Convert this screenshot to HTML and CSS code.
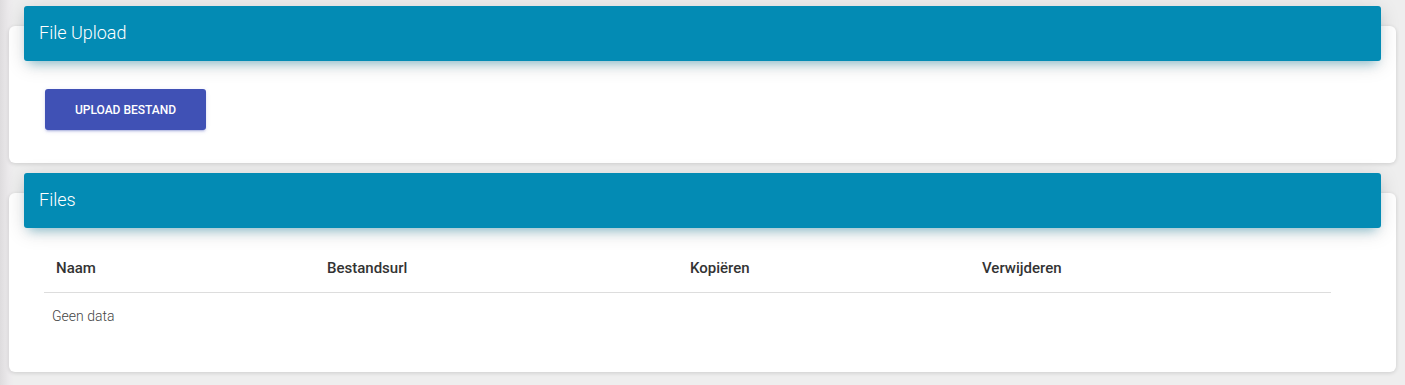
FILE: index.html
```html
<!DOCTYPE html>
<html>
<head>
<meta charset="utf-8">
<link rel="stylesheet" href="styles.css">
</head>
<body>
<div class="page">
  <div class="card card-upload">
    <div class="card-header"><h4 class="card-title">File Upload</h4></div>
    <div class="card-body">
      <button class="btn">UPLOAD BESTAND</button>
    </div>
  </div>
  <div class="card card-files">
    <div class="card-header"><h4 class="card-title">Files</h4></div>
    <div class="card-body">
      <table class="table">
        <thead>
          <tr>
            <th class="c1">Naam</th>
            <th class="c2">Bestandsurl</th>
            <th class="c3">Kopiëren</th>
            <th class="c4">Verwijderen</th>
          </tr>
        </thead>
        <tbody>
          <tr><td class="empty" colspan="4">Geen data</td></tr>
        </tbody>
      </table>
    </div>
  </div>
</div>
</body>
</html>
```
FILE: styles.css
```css
html, body {
  margin: 0;
  padding: 0;
}
body {
  background: #eeeeee;
  font-family: Roboto, "Liberation Sans", Arial, sans-serif;
  color: #3c4858;
  width: 1405px;
  height: 385px;
  overflow: hidden;
}
.page {
  position: relative;
  padding: 26px 9px 0 9px;
  height: 385px;
  box-sizing: border-box;
  background: linear-gradient(to right, #dedcde 0, #eceaec 9px, #eeeeee 14px);
}
.card {
  background: #ffffff;
  border-radius: 6px;
  box-shadow: 0 1px 4px rgba(0, 0, 0, 0.14);
  display: flex;
  flex-direction: column;
}
.card-files {
  margin-top: 30px;
}
.card-header {
  margin: -20px 15px 0 15px;
  height: 55px;
  box-sizing: border-box;
  background: #038bb4;
  border-radius: 3px;
  padding: 0 15px;
  display: flex;
  align-items: center;
  box-shadow: 0 4px 20px 0 rgba(0, 0, 0, 0.14), 0 7px 10px -5px rgba(3, 139, 180, 0.4);
}
.card-title {
  margin: 0;
  font-size: 18px;
  font-weight: 300;
  color: #ffffff;
  line-height: 1;
  padding-bottom: 2px;
}
.card-upload .card-body {
  padding: 28px 36px 33px 36px;
  display: flex;
}
.btn {
  width: 161px;
  height: 41px;
  border: none;
  border-radius: 3px;
  background: #4051b5;
  color: #ffffff;
  font-family: Roboto, "Liberation Sans", Arial, sans-serif;
  font-size: 12px;
  font-weight: 500;
  letter-spacing: 0;
  box-shadow: 0 2px 2px 0 rgba(63, 81, 181, 0.14), 0 3px 1px -2px rgba(63, 81, 181, 0.2), 0 1px 5px 0 rgba(63, 81, 181, 0.12);
  padding: 0;
}
.card-files .card-body {
  padding: 16px 65px 0 35px;
  height: 144px;
  box-sizing: border-box;
}
.table {
  width: 1287px;
  border-collapse: collapse;
  table-layout: fixed;
}
.table th {
  text-align: left;
  font-size: 15px;
  font-weight: 500;
  color: #333333;
  height: 48px;
  padding: 0 12px;
  border-bottom: 1px solid #dddddd;
  vertical-align: middle;
}
.c1 { width: 247px; }
.c2 { width: 339px; }
.c3 { width: 268px; }
.c4 { width: auto; }
.table td.empty {
  font-size: 14px;
  font-weight: 300;
  color: #444444;
  padding: 0 8px;
  height: 46px;
  vertical-align: middle;
}
```
